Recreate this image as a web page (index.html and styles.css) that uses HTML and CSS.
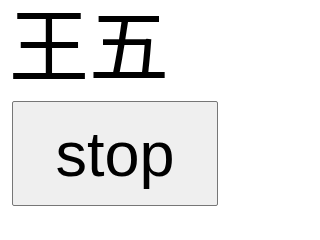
FILE: index.html
```html
<!DOCTYPE html>
<html>
<head>
<meta charset="utf-8">
<link rel="stylesheet" href="styles.css">
</head>
<body>
<div class="name">王五</div>
<button class="stop">stop</button>
</body>
</html>
```
FILE: styles.css
```css
html, body { margin: 0; padding: 0; background: #fff; }
body { padding: 0 0 0 9px; font-family: "Liberation Sans", Arial, "Noto Sans CJK SC", sans-serif; }
.name {
  font-family: "Noto Sans CJK SC", sans-serif;
  font-size: 80px;
  line-height: 80px;
  color: #000;
}
.stop {
  display: block;
  margin: 21px 0 0 3px;
  width: 206px;
  height: 105px;
  padding: 0;
  font-family: "Liberation Sans", Arial, sans-serif;
  font-size: 63px;
  color: #000;
  background: #efefef;
  border: 1px solid #767676;
  border-radius: 2px;
}
```
